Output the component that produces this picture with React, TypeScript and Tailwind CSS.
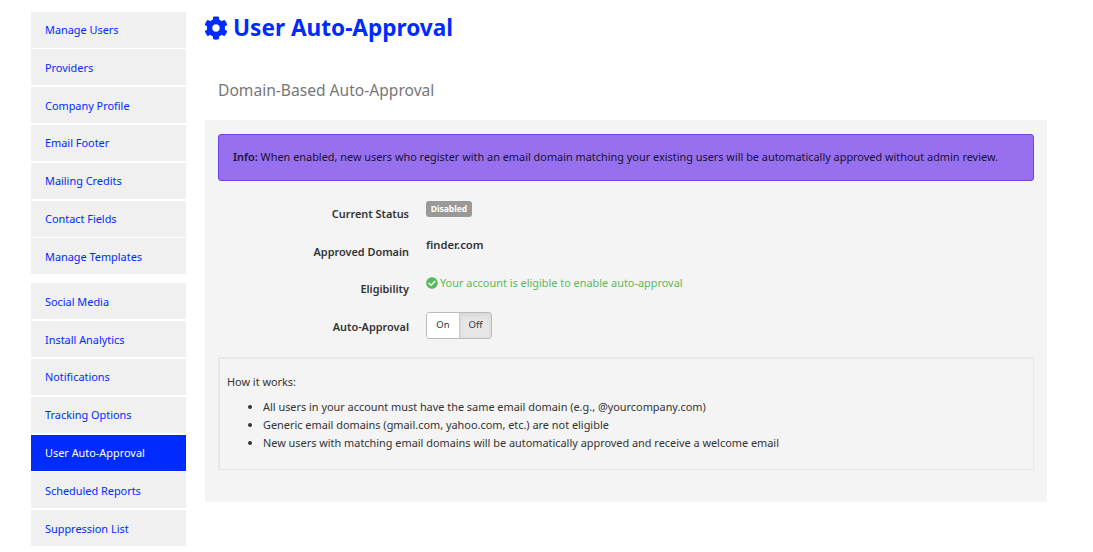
import React from "react";
import { FaCog, FaCheckCircle } from "react-icons/fa";

const group1 = ["Manage Users", "Providers", "Company Profile", "Email Footer", "Mailing Credits", "Contact Fields", "Manage Templates"];
const group2 = ["Social Media", "Install Analytics", "Notifications", "Tracking Options", "User Auto-Approval", "Scheduled Reports", "Suppression List"];

function Item({ label }: { label: string }) {
  const active = label === "User Auto-Approval";
  return (
    <a className={`flex h-9 items-center pl-[14px] mb-[1.8px] pt-[1px] text-[10.9px] ${active ? "bg-[#002bff] text-white" : "bg-[#f0f0f0] text-[#002bff]"}`}>
      {label}
    </a>
  );
}

function Row({ label, children, className = "", labelClass = "pt-[4px]" }: { label: string; children: React.ReactNode; className?: string; labelClass?: string }) {
  return (
    <div className={`flex ${className}`}>
      <div className={`w-[191px] text-right text-[10.9px] font-semibold text-[#333] ${labelClass}`}>{label}</div>
      <div className="ml-[17px] text-[10.9px]">{children}</div>
    </div>
  );
}

export default function App() {
  return (
    <div className="flex h-[552px] w-[1093px] overflow-hidden bg-white pl-[31px] font-['Noto_Sans','Open_Sans',sans-serif] text-[#333]">
      <nav className="w-[155px] shrink-0 pt-[11.7px]">
        <div className="mb-[9px]">
          {group1.map((l) => <Item key={l} label={l} />)}
        </div>
        <div>
          {group2.map((l) => <Item key={l} label={l} />)}
        </div>
      </nav>
      <main className="ml-[18px] w-[843px] pt-[12px]">
        <h1 className="flex h-[32px] items-center gap-[6px] text-[22.6px] font-bold text-[#002bff]">
          <FaCog className="text-[24px]" />
          <span className="-ml-[1px]">User Auto-Approval</span>
        </h1>
        <h2 className="mt-[34px] ml-[14px] text-[15.6px] leading-[24px] text-[#777]">Domain-Based Auto-Approval</h2>
        <section className="ml-[1px] mt-[18px] h-[382px] bg-[#f4f4f4] px-[13px] pt-[14px]">
          <div className="flex h-[47px] items-center rounded-[3px] border border-[#6f42e8] bg-[#9670ee] pl-[14px] text-[10.9px] text-[#1c1030]">
            <span><b className="font-semibold">Info:</b> When enabled, new users who register with an email domain matching your existing users will be automatically approved without admin review.</span>
          </div>
          <div className="mt-[21px]">
            <Row label="Current Status" className="h-[38px]">
              <span className="-mt-[1px] block w-[46px] rounded-[3px] bg-[#999] py-[1px] text-center text-[8.5px] font-bold leading-[14px] text-white">Disabled</span>
            </Row>
            <Row label="Approved Domain" className="h-[37px]">
              <span className="-mt-[4px] block text-[11.2px] font-semibold leading-[17px]">finder.com</span>
            </Row>
            <Row label="Eligibility" className="h-[37px]">
              <span className="-mt-[3px] flex items-center gap-[2px] leading-[17px] text-[#5cb85c]"><FaCheckCircle className="text-[12px]" /> Your account is eligible to enable auto-approval</span>
            </Row>
            <Row label="Auto-Approval" className="h-[43px]" labelClass="pt-[5px]">
              <div className="-mt-[2px] flex h-[27px] w-[66px] overflow-hidden rounded-[3px] border border-[#bbb] text-[9.5px]">
                <span className="flex w-[32px] items-center justify-center bg-white">On</span>
                <span className="flex flex-1 items-center justify-center border-l border-[#ccc] bg-[#e6e6e6] shadow-[inset_0_2px_4px_rgba(0,0,0,0.08)]">Off</span>
              </div>
            </Row>
          </div>
          <div className="h-[113px] border-2 border-[#e8e8e8] border-r-[1px] border-b-[1px] pl-[7px] pt-[14px] text-[10.9px] text-[#333]">
            <p className="leading-[18px]">How it works:</p>
            <ul className="mt-[7px] list-disc pl-[36px] leading-[18px]">
              <li>All users in your account must have the same email domain (e.g., @yourcompany.com)</li>
              <li>Generic email domains (gmail.com, yahoo.com, etc.) are not eligible</li>
              <li>New users with matching email domains will be automatically approved and receive a welcome email</li>
            </ul>
          </div>
        </section>
      </main>
    </div>
  );
}
